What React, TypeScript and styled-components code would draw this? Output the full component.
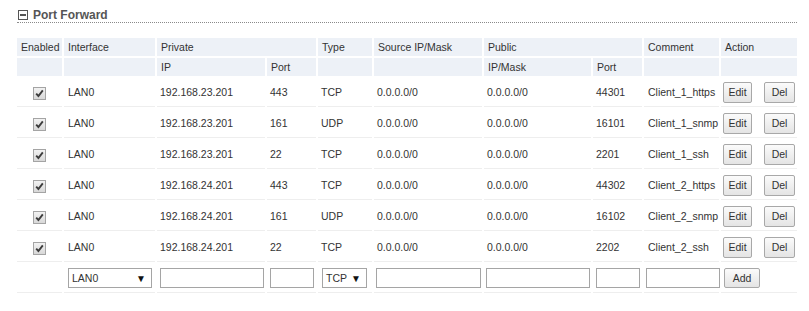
import React from "react";
import styled, { createGlobalStyle } from "styled-components";

const GlobalStyle = createGlobalStyle`
  body {
    margin: 0;
    background: #ffffff;
    font-family: "Liberation Sans", Arial, sans-serif;
    color: #333333;
  }
`;

const Page = styled.div`
  padding: 7px 12px 0 15px;
`;

const SectionTitle = styled.div`
  display: flex;
  align-items: center;
  gap: 5px;
  margin-left: 2px;
  width: 780px;
  height: 15px;
  border-bottom: 1px dotted #8a8a8a;
  color: #555555;
  font-size: 12px;
  font-weight: bold;
`;

const Toggle = styled.span`
  position: relative;
  box-sizing: border-box;
  width: 10px;
  height: 10px;
  margin-left: 1px;
  border: 1px solid #555555;
  background: #ffffff;

  &::after {
    content: "";
    position: absolute;
    left: 1px;
    right: 1px;
    top: 3px;
    height: 2px;
    background: #555555;
  }
`;

const Table = styled.table`
  margin-top: 13px;
  width: 784px;
  table-layout: fixed;
  border-collapse: separate;
  border-spacing: 2px;
  font-size: 10.5px;
`;

const Th = styled.th`
  height: 18px;
  padding: 0 4px;
  background: #edf1f7;
  color: #333333;
  font-weight: normal;
  text-align: left;
  white-space: nowrap;
  line-height: 18px;
`;

const Td = styled.td<{ $center?: boolean; $pad?: number }>`
  box-sizing: border-box;
  height: 29px;
  padding: 0 0 0 ${(p) => p.$pad ?? 3}px;
  border-bottom: 1px solid #eeeeee;
  color: #333333;
  white-space: nowrap;
  text-align: ${(p) => (p.$center ? "center" : "left")};
  vertical-align: middle;
`;

const Check = styled.span`
  display: inline-flex;
  align-items: center;
  justify-content: center;
  box-sizing: border-box;
  width: 13px;
  height: 13px;
  margin-top: 2px;
  border: 1px solid #a4a4a4;
  background: linear-gradient(#f2f2f2, #d8d8d8);
`;

const Button = styled.button<{ $w: number; $h?: number; $gap?: number }>`
  box-sizing: border-box;
  width: ${(p) => p.$w}px;
  height: ${(p) => p.$h ?? 21}px;
  margin-left: ${(p) => p.$gap ?? 0}px;
  padding: 0;
  border: 1px solid #a8a8a8;
  border-radius: 2px;
  background: linear-gradient(#fbfbfb, #e4e4e4);
  color: #333333;
  font-family: "Liberation Sans", Arial, sans-serif;
  font-size: 10.5px;
  vertical-align: middle;
`;

const TextInput = styled.input<{ $w: number }>`
  box-sizing: border-box;
  width: ${(p) => p.$w}px;
  height: 20px;
  margin: 0;
  padding: 0 3px;
  border: 1px solid #a5a5a5;
  background: #ffffff;
  vertical-align: middle;
`;

const SelectBox = styled.div<{ $w: number }>`
  display: inline-flex;
  align-items: center;
  justify-content: space-between;
  box-sizing: border-box;
  width: ${(p) => p.$w}px;
  height: 20px;
  padding: 0 5px 0 3px;
  border: 1px solid #a5a5a5;
  background: #ffffff;
  color: #333333;
  vertical-align: middle;
`;

const Arrow = styled.span`
  font-size: 10px;
  color: #111111;
`;

const CheckMark = () => (
  <Check>
    <svg width="9" height="9" viewBox="0 0 9 9">
      <path d="M1.2 4.6 L3.4 7 L7.8 1.4" fill="none" stroke="#3c3c3c" strokeWidth="1.9" />
    </svg>
  </Check>
);

const rules = [
  ["192.168.23.201", "443", "TCP", "44301", "Client_1_https"],
  ["192.168.23.201", "161", "UDP", "16101", "Client_1_snmp"],
  ["192.168.23.201", "22", "TCP", "2201", "Client_1_ssh"],
  ["192.168.24.201", "443", "TCP", "44302", "Client_2_https"],
  ["192.168.24.201", "161", "UDP", "16102", "Client_2_snmp"],
  ["192.168.24.201", "22", "TCP", "2202", "Client_2_ssh"],
];

const widths = [45, 91, 108, 49, 54, 108, 107, 49, 75, 76];

export default function App() {
  return (
    <Page>
      <GlobalStyle />
      <SectionTitle>
        <Toggle />
        Port Forward
      </SectionTitle>
      <Table>
        <colgroup>
          {widths.map((w, i) => (
            <col key={i} style={{ width: w }} />
          ))}
        </colgroup>
        <thead>
          <tr>
            <Th>Enabled</Th>
            <Th>Interface</Th>
            <Th colSpan={2}>Private</Th>
            <Th>Type</Th>
            <Th>Source IP/Mask</Th>
            <Th colSpan={2}>Public</Th>
            <Th>Comment</Th>
            <Th>Action</Th>
          </tr>
          <tr>
            <Th />
            <Th />
            <Th>IP</Th>
            <Th>Port</Th>
            <Th />
            <Th />
            <Th>IP/Mask</Th>
            <Th>Port</Th>
            <Th />
            <Th />
          </tr>
        </thead>
        <tbody>
          {rules.map((r, i) => (
            <tr key={i}>
              <Td $center $pad={0}>
                <CheckMark />
              </Td>
              <Td $pad={4}>LAN0</Td>
              <Td>{r[0]}</Td>
              <Td>{r[1]}</Td>
              <Td>{r[2]}</Td>
              <Td>0.0.0.0/0</Td>
              <Td>0.0.0.0/0</Td>
              <Td>{r[3]}</Td>
              <Td $pad={4}>{r[4]}</Td>
              <Td $pad={2}>
                <Button $w={29}>Edit</Button>
                <Button $w={31} $gap={12}>Del</Button>
              </Td>
            </tr>
          ))}
          <tr>
            <Td />
            <Td $pad={4}>
              <SelectBox $w={84}>
                LAN0 <Arrow>▼</Arrow>
              </SelectBox>
            </Td>
            <Td>
              <TextInput $w={104} />
            </Td>
            <Td>
              <TextInput $w={44} />
            </Td>
            <Td $pad={4}>
              <SelectBox $w={45}>
                TCP <Arrow>▼</Arrow>
              </SelectBox>
            </Td>
            <Td $pad={2}>
              <TextInput $w={105} />
            </Td>
            <Td $pad={2}>
              <TextInput $w={104} />
            </Td>
            <Td>
              <TextInput $w={44} />
            </Td>
            <Td $pad={2}>
              <TextInput $w={74} />
            </Td>
            <Td>
              <Button $w={36} $h={20}>Add</Button>
            </Td>
          </tr>
        </tbody>
      </Table>
    </Page>
  );
}
